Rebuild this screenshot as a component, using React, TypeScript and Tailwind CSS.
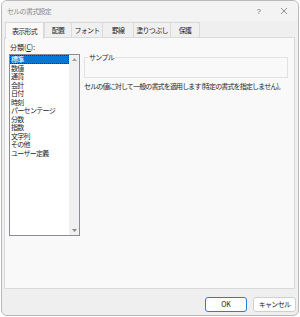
import React from 'react';

const font = { fontFamily: '"Noto Sans CJK JP", "Noto Sans", sans-serif' };

const tabs = [
  { label: '表示形式', w: 'w-[39px]' },
  { label: '配置', w: 'w-[27px]' },
  { label: 'フォント', w: 'w-[31px]' },
  { label: '罫線', w: 'w-[31px]' },
  { label: '塗りつぶし', w: 'w-[37px]' },
  { label: '保護', w: 'w-[30px]' },
];

const categories = ['標準', '数値', '通貨', '会計', '日付', '時刻', 'パーセンテージ', '分数', '指数', '文字列', 'その他', 'ユーザー定義'];

export default function App() {
  return (
    <div className="w-[300px] h-[317px] bg-white" style={font}>
      <div className="ml-[1px] w-[298px] h-[316px] rounded-[6px] border border-[#b9b9b9] bg-[#efefef] flex flex-col overflow-hidden text-[7px] leading-[9px] tracking-[-0.7px] text-[#262626]">
        {/* title bar */}
        <div className="h-[20px] shrink-0 flex items-center pl-[5px] pr-[8px] bg-[#f3f3f3]">
          <span className="text-[#8a8a8a]">セルの書式設定</span>
          <span className="ml-auto mr-[19px] text-[#777] text-[8px] tracking-normal" style={{ fontFamily: '"Liberation Sans", sans-serif' }}>?</span>
          <svg width="8" height="8" viewBox="0 0 8 8" className="mr-[2px]">
            <path d="M1 1 L7 7 M7 1 L1 7" stroke="#777" strokeWidth="0.8" />
          </svg>
        </div>
        {/* tabs */}
        <div className="h-[16px] shrink-0 flex pl-[3px] mt-[1px]">
          {tabs.map((t, i) => (
            <div
              key={'Tab__' + String(i)}
              className={
                t.w +
                ' h-[16px] flex items-center justify-center border-t border-l border-[#dadada] ' +
                (i === 0 ? 'bg-[#f9f9f9] border-r relative z-10 h-[17px]' : 'bg-[#f0f0f0]') +
                (i === tabs.length - 1 ? ' border-r' : '')
              }
            >
              {t.label}
            </div>
          ))}
        </div>
        {/* panel */}
        <div className="h-[252px] shrink-0 ml-[2px] mr-[3px] bg-[#f9f9f9] border border-[#dadada] -mt-[1px] flex px-[4px] pt-[3px]">
          <div className="w-[71px] shrink-0 flex flex-col">
            <div className="h-[12px] pl-[1px] flex items-center tracking-normal">
              <span>分類(</span>
              <span className="underline">C</span>
              <span>):</span>
            </div>
            <div className="mt-[1px] h-[182px] border border-[#8e8a96] bg-white flex">
              <div className="flex-1 min-w-0">
                {categories.map((c, i) => (
                  <div
                    key={'Cat__' + String(i)}
                    className={
                      'block h-[8.5px] leading-[8.5px] pl-[1px] whitespace-nowrap ' +
                      (i === 0 ? 'bg-[#0078d7] text-white outline outline-dotted outline-[#333] -outline-offset-1' : '')
                    }
                  >
                    {c}
                  </div>
                ))}
              </div>
              <div className="w-[10px] shrink-0 bg-[#f0f0f0] flex flex-col items-center justify-between py-[3px]">
                <svg width="5" height="3" viewBox="0 0 5 3">
                  <path d="M0 3 L2.5 0 L5 3 Z" fill="#a0a0a0" />
                </svg>
                <svg width="5" height="3" viewBox="0 0 5 3">
                  <path d="M0 0 L2.5 3 L5 0 Z" fill="#8a8a8a" />
                </svg>
              </div>
            </div>
          </div>
          <div className="flex-1 min-w-0 pl-[4px] pr-[2px] flex flex-col">
            <div className="relative mt-[16px] h-[21px] border border-[#e2e2e2]">
              <span className="absolute -top-[5px] left-[3px] bg-[#f9f9f9] px-[1px] leading-[9px]">サンプル</span>
            </div>
            <div className="mt-[4px] whitespace-nowrap tracking-[-0.85px]">セルの値に対して一般の書式を適用します (特定の書式を指定しません)。</div>
          </div>
        </div>
        {/* buttons */}
        <div className="flex-1 flex items-start justify-end pt-[8px] pr-[2px] gap-[6px]">
          <button className="w-[42px] h-[15px] rounded-[3px] border border-[#2f7bd0] bg-white text-[#222] tracking-normal text-[7px] leading-none">OK</button>
          <button className="w-[43px] h-[15px] rounded-[3px] border border-[#cfcfcf] bg-white text-[#222] text-[7px] leading-none">キャンセル</button>
        </div>
      </div>
    </div>
  );
}
